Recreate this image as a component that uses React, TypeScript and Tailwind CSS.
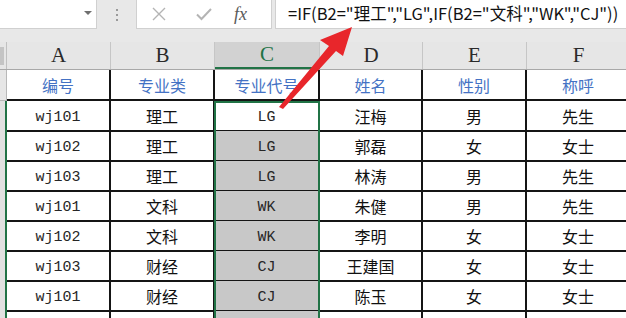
import React from 'react';

const rows = [
  ['wj101', '理工', 'LG', '汪梅', '男', '先生'],
  ['wj102', '理工', 'LG', '郭磊', '女', '女士'],
  ['wj103', '理工', 'LG', '林涛', '男', '先生'],
  ['wj101', '文科', 'WK', '朱健', '男', '先生'],
  ['wj102', '文科', 'WK', '李明', '女', '女士'],
  ['wj103', '财经', 'CJ', '王建国', '女', '女士'],
  ['wj101', '财经', 'CJ', '陈玉', '女', '女士'],
  ['', '', '', '', '', ''],
];

const headers = ['编号', '专业类', '专业代号', '姓名', '性别', '称呼'];
const letters = ['A', 'B', 'C', 'D', 'E', 'F'];

const gridCols = 'grid grid-cols-[7px_104px_104px_105px_103px_104px_104px]';

const FormulaBar: React.FC = () => (
  <div className="flex h-[29px] bg-[#e8e8e8]">
    <div className="relative w-[97px] bg-white border-r border-b border-[#d0d0d0]">
      <div className="absolute left-[84px] top-[11px] w-0 h-0 border-l-[4px] border-r-[4px] border-t-[4px] border-l-transparent border-r-transparent border-t-[#6f6f6f]" />
    </div>
    <div className="w-[39px] flex flex-col items-center justify-center gap-[3px]">
      <span className="w-[2px] h-[2px] bg-[#9a9a9a]" />
      <span className="w-[2px] h-[2px] bg-[#9a9a9a]" />
      <span className="w-[2px] h-[2px] bg-[#9a9a9a]" />
    </div>
    <div className="w-[136px] bg-white border-x border-b border-[#d0d0d0] flex items-center">
      <svg className="ml-[15px]" width="14" height="14" viewBox="0 0 14 14">
        <path d="M1 1L13 13M13 1L1 13" stroke="#b4b4b4" strokeWidth="1.4" fill="none" />
      </svg>
      <svg className="ml-[30px]" width="16" height="14" viewBox="0 0 16 14">
        <path d="M1 7.5L5.5 12L15 2" stroke="#b4b4b4" strokeWidth="2" fill="none" />
      </svg>
      <span className="ml-[22px] text-[18px] italic text-[#5a5a5a] font-['Liberation_Serif',serif] leading-none">
        fx
      </span>
    </div>
    <div className="ml-[3px] flex-1 bg-white border-l border-b border-[#d0d0d0] flex items-center pl-[12px] pb-[1px] font-['Noto_Sans_CJK_SC',sans-serif] text-[16.5px] text-[#111] whitespace-nowrap">
      =IF(B2="理工","LG",IF(B2="文科","WK","CJ"))
    </div>
  </div>
);

const App: React.FC = () => {
  return (
    <div className="relative w-[626px] h-[318px] overflow-hidden bg-[#e6e6e6]">
      <FormulaBar />
      <div className="h-[13px] bg-[#e8e8e8]" />

      <div className="relative">
        {/* column letters */}
        <div className={`${gridCols} h-[28px] bg-[#e6e6e6] border-b border-[#a8a8a8]`}>
          <div className="relative border-r border-[#c0c0c0]">
            <div className="absolute left-0 bottom-[4px] w-[4px] h-[18px] bg-[#c4c4c4]" />
          </div>
          {letters.map((l) => (
            <div
              key={l}
              className={`flex items-center justify-center border-r border-[#c6c6c6] font-['Liberation_Serif',serif] text-[21px] leading-none ${
                l === 'C' ? 'bg-[#d2d2d2] text-[#217346] border-b-2 border-b-[#217346]' : 'text-[#2a2a2a]'
              }`}
            >
              {l}
            </div>
          ))}
        </div>

        {/* header labels */}
        <div className={`${gridCols} h-[31px] bg-white`}>
          <div className="bg-[#e6e6e6] border-r border-b border-[#b8b8b8]" />
          {headers.map((h) => (
            <div
              key={h}
              className="flex items-center justify-center border-r-2 border-b-2 border-[#151515] text-[16px] text-[#4472c4] font-['Noto_Sans_CJK_SC',sans-serif]"
            >
              {h}
            </div>
          ))}
        </div>

        {rows.map((r, i) => (
          <div key={i} className={`${gridCols} h-[30px] bg-white`}>
            <div className="bg-[#e1e1e1] border-b border-[#c8c8c8] border-r-2 border-r-[#217346]" />
            {r.map((v, j) => {
              const latin = j === 0 || j === 2;
              const sel = j === 2 && i > 0;
              return (
                <div
                  key={j}
                  className={`flex items-center justify-center border-r-2 border-b-2 border-[#151515] ${
                    latin
                      ? "pt-[6px] font-['Liberation_Mono',monospace] text-[15px] text-[#262626]"
                      : "pt-[2px] font-['Noto_Sans_CJK_SC',sans-serif] text-[16px] text-[#111]"
                  } ${sel ? 'bg-[#c8c8c8]' : ''}`}
                >
                  {v}
                </div>
              );
            })}
          </div>
        ))}

        {/* selection outline over C2:C9 */}
        <div className="absolute left-[214px] top-[59px] w-[106px] h-[300px] border-2 border-[#217346] pointer-events-none" />
      </div>

      {/* red annotation arrow */}
      <svg className="absolute left-0 top-0 pointer-events-none" width="626" height="318" viewBox="0 0 626 318">
        <polygon points="279,107 329,46 320,40 352,27 343,56 336,51 283,109" fill="#e8262b" />
      </svg>
    </div>
  );
};

export default App;
